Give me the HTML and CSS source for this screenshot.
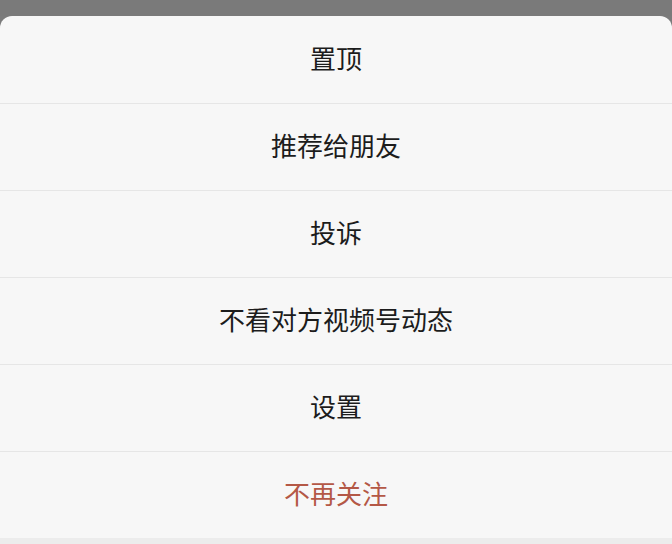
FILE: index.html
```html
<!DOCTYPE html>
<html lang="zh">
<head>
<meta charset="utf-8">
<link rel="stylesheet" href="styles.css">
</head>
<body>
<div class="backdrop"></div>
<div class="sheet">
  <div class="item">置顶</div>
  <div class="item">推荐给朋友</div>
  <div class="item">投诉</div>
  <div class="item">不看对方视频号动态</div>
  <div class="item">设置</div>
  <div class="item danger">不再关注</div>
</div>
<div class="footer"></div>
</body>
</html>
```
FILE: styles.css
```css
html, body {
  margin: 0;
  padding: 0;
}
body {
  width: 672px;
  height: 544px;
  background: #7b7b7b;
  font-family: "Noto Sans CJK SC", "Noto Sans", sans-serif;
  overflow: hidden;
  display: flex;
  flex-direction: column;
}
.backdrop {
  height: 16px;
  background: #7a7a7a;
  flex: none;
}
.sheet {
  background: #f7f7f7;
  border-radius: 12px 12px 0 0;
  display: flex;
  flex-direction: column;
  flex: none;
}
.item {
  height: 87px;
  box-sizing: border-box;
  padding-bottom: 5px;
  display: flex;
  align-items: center;
  justify-content: center;
  font-size: 26px;
  color: #1c1c1c;
}
.item + .item {
  border-top: 1px solid #e6e6e6;
}
.danger {
  color: #b45846;
}
.footer {
  flex: 1;
  background: #ececec;
}
```
